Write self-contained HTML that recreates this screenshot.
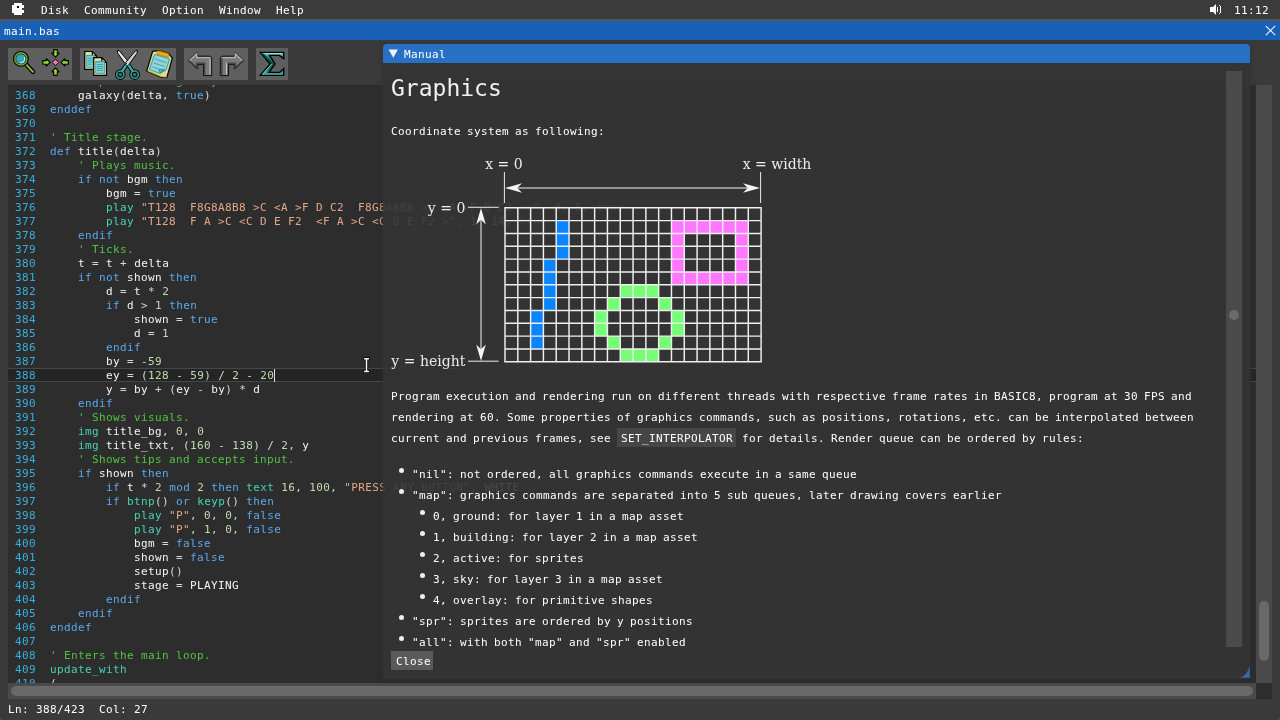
<!DOCTYPE html>
<html lang="en">
<head>
<meta charset="utf-8">
<title>BASIC8 - main.bas</title>
<style>
*{box-sizing:border-box;margin:0;padding:0}
html,body{width:1280px;height:720px;overflow:hidden;background:#3a3a3a}
body{position:relative;font-family:"DejaVu Sans Mono","Liberation Mono",monospace;font-size:11px;line-height:14px;letter-spacing:0.378px;color:#fff;cursor:default;-webkit-text-stroke:0}
#app{position:absolute;left:0;top:0;width:1280px;height:720px;will-change:transform;overflow:hidden}
.abs{position:absolute}
.t{position:absolute;white-space:pre;height:14px}
#menubar{position:absolute;left:0;top:0;width:1280px;height:19px;background:#3b3b3b}
#menuline{position:absolute;left:0;top:19px;width:1280px;height:701px;background:#585858}
#win{position:absolute;left:0;top:21px;width:1280px;height:699px;background:#3a3a3a;border-radius:3px}
#titlebar{position:absolute;left:0;top:21px;width:1280px;height:19px;background:#1961b6;border-radius:3px 3px 0 0}
.grp{position:absolute;top:48px;height:32px;background:#5f5f5f}
#editor{position:absolute;left:8px;top:85px;width:1248px;height:598px;background:#2d2d2d;overflow:hidden}
.cl{position:absolute;left:0;width:1248px;height:14px;white-space:pre}
.cl.cur{background:#252525;box-shadow:inset 0 1px 0 #474747,inset 0 -1px 0 #474747}
.ln{position:absolute;left:7px;top:1px;color:#34b0e0}
.cd{position:absolute;left:42px;top:1px;color:#e4e4e4}
.kw{color:#58a8f0}.fn{color:#44d4b4}.cm{color:#50c440}.st{color:#e4a689}.nu{color:#c0dcae}.id{color:#f4f4f4}.pu{color:#d8d8d8}
#vtrack{position:absolute;left:1256px;top:85px;width:16px;height:598px;background:#4a4a4a}
#vthumb{position:absolute;left:1259px;top:601px;width:10px;height:60px;background:#696969;border-radius:5px}
#htrack{position:absolute;left:8px;top:683px;width:1248px;height:16px;background:#4a4a4a}
#hthumb{position:absolute;left:11px;top:686px;width:1242px;height:10px;background:#696969;border-radius:5px}
#corner{position:absolute;left:1256px;top:683px;width:16px;height:16px;background:#2d2d2d}
#modal{position:absolute;left:383px;top:44px;width:867px;height:635px;background:rgba(52,52,52,0.9);border-radius:4px 4px 3px 3px;box-shadow:0 0 5px 1px rgba(48,48,48,0.6)}
#mtitle{position:absolute;left:0;top:0;width:867px;height:19px;background:#2671c4;border-radius:4px 4px 0 0}
#mtrack{position:absolute;left:1226px;top:71px;width:16px;height:576px;background:#4a4a4a}
#mthumb{position:absolute;left:1229px;top:310px;width:10px;height:10px;background:#6a6a6a;border-radius:5px}
#mclip{position:absolute;left:383px;top:70px;width:843px;height:578px;overflow:hidden}
.m{position:absolute;white-space:pre;height:14px;color:#fff;word-spacing:-1px}
.b{position:absolute;width:5px;height:5px;border-radius:2.5px;background:#f0f0f0}
h1{position:absolute;left:8px;top:4px;font:normal 23px/28px "DejaVu Sans Mono","Liberation Mono",monospace;letter-spacing:0;color:#f0f0f0;white-space:pre}
#codebox{position:absolute;left:234px;top:358px;width:119px;height:19px;background:#464646}
#close{position:absolute;left:391px;top:651px;width:42px;height:19px;background:#5a5a5a}
</style>
</head>
<body>
<div id="app">
<div id="menubar"></div>
<div id="menuline"></div>
<div id="win"></div>
<!--LOGO-->
<div class="t" style="left:41px;top:4px">Disk</div>
<div class="t" style="left:84px;top:4px">Community</div>
<div class="t" style="left:162px;top:4px">Option</div>
<div class="t" style="left:219px;top:4px">Window</div>
<div class="t" style="left:276px;top:4px">Help</div>
<div class="t" style="left:1234px;top:4px">11:12</div>
<div id="titlebar"></div>
<div class="t" style="left:4px;top:25px">main.bas</div>
<svg class="abs" style="left:1265px;top:25px" width="11" height="11" viewBox="0 0 11 11"><path d="M0.8 0.8 L10.2 10.2 M10.2 0.8 L0.8 10.2" stroke="#f4f4f4" stroke-width="1.1" fill="none"/></svg>
<div class="grp" style="left:8px;width:64px"></div>
<div class="grp" style="left:80px;width:96px"></div>
<div class="grp" style="left:184px;width:64px"></div>
<div class="grp" style="left:256px;width:32px"></div>
<svg class="abs" style="left:0;top:0" width="1280" height="20" viewBox="0 0 1280 20" shape-rendering="crispEdges">
<g fill="#ffffff">
<rect x="14" y="3" width="8" height="12"/>
<rect x="12" y="5" width="10" height="8"/>
<rect x="22" y="5" width="2" height="3"/>
<rect x="22" y="10" width="2" height="3"/>
<rect x="21" y="5" width="1" height="0"/>
</g>
<rect x="17" y="6" width="2" height="2" fill="#101010"/>
<g fill="#ffffff">
<rect x="1210" y="7" width="3" height="5"/>
<path d="M1213 7 L1216 4 V15 L1213 12 Z" shape-rendering="geometricPrecision"/>
<rect x="1217" y="7" width="1" height="5"/>
<path d="M1219 5 h1 v1 h1 v7 h-1 v1 h-1 v-1 h1 v-7 h-1 Z"/>
</g>
</svg>
<svg class="abs" style="left:0;top:44px" width="300" height="40" viewBox="0 44 300 40">
<defs>
<linearGradient id="gl" x1="0" y1="0" x2="0" y2="1"><stop offset="0" stop-color="#a8a8a8"/><stop offset="0.3" stop-color="#808080"/><stop offset="1" stop-color="#6a6a6a"/></linearGradient>
<linearGradient id="gr" x1="0" y1="0" x2="0" y2="1"><stop offset="0" stop-color="#a8a8a8"/><stop offset="0.3" stop-color="#808080"/><stop offset="1" stop-color="#6a6a6a"/></linearGradient>
<linearGradient id="gs" x1="0" y1="0" x2="0" y2="1"><stop offset="0" stop-color="#78dcd4"/><stop offset="0.2" stop-color="#1c8682"/><stop offset="0.6" stop-color="#0c5653"/><stop offset="0.9" stop-color="#2a9a94"/><stop offset="1" stop-color="#68d0c8"/></linearGradient>
</defs>
<!-- find -->
<path d="M26.3 64.6 L33 71.8" stroke="#000" stroke-width="4.4" stroke-linecap="round" fill="none"/>
<path d="M26.3 64.6 L33 71.8" stroke="#88c436" stroke-width="1.9" stroke-linecap="round" fill="none"/>
<circle cx="20.9" cy="58.9" r="7.9" fill="#000"/>
<circle cx="20.9" cy="58.9" r="6.8" fill="#6cac2c"/>
<circle cx="20.9" cy="58.9" r="5.4" fill="#0c3c44"/>
<circle cx="20.9" cy="58.9" r="4.7" fill="#3aa4b0"/>
<path d="M24.3 57.2 A3.8 3.8 0 0 1 19.8 62.6" stroke="#d6f4f4" stroke-width="1.1" fill="none"/>
<!-- center -->
<g fill="#98d830" stroke="#000" stroke-width="1.2" stroke-linejoin="round">
<path d="M53.7 49.7 H57.3 V53.2 H59.1 L55.5 57.1 L51.9 53.2 H53.7 Z"/>
<path d="M53.7 75.3 H57.3 V71.8 H59.1 L55.5 67.9 L51.9 71.8 H53.7 Z"/>
<path d="M42.8 60.6 V64.2 H46.3 V66 L50.2 62.4 L46.3 58.8 V60.6 Z"/>
<path d="M68.4 60.6 V64.2 H64.9 V66 L61 62.4 L64.9 58.8 V60.6 Z"/>
</g>
<g fill="none" stroke="#6aa820" stroke-width="0.9">
<path d="M56.7 50.4 V53.6 M56.7 74.6 V71.4 M43.4 63.6 H46.6 M67.8 63.6 H64.6"/>
</g>
<path d="M55.5 59.2 L58.7 62.4 L55.5 65.6 L52.3 62.4 Z" fill="#ff78b4" stroke="#000" stroke-width="0.9"/>
<!-- copy -->
<g stroke="#000" stroke-width="1.2" stroke-linejoin="miter">
<path d="M84.7 51.5 H92.3 L96.5 55.7 V69.4 H84.7 Z" fill="#e6dca0"/>
<path d="M92.3 51.5 V55.7 H96.5" fill="none"/>
</g>
<rect x="86.3" y="55" width="8.6" height="12.6" fill="#34a4ac"/>
<rect x="87.3" y="56.2" width="6.6" height="10.4" fill="#90d4d8"/>
<path d="M88 58.2 H93.4 M88 60.2 H93.4 M88 62.2 H93.4 M88 64.2 H93.4" stroke="#2c9aa4" stroke-width="0.9"/>
<g stroke="#000" stroke-width="1.2" stroke-linejoin="miter">
<path d="M93.7 57.7 H101.8 L106.5 62.4 V75.4 H93.7 Z" fill="#e6dca0"/>
<path d="M101.8 57.7 V62.4 H106.5" fill="none"/>
</g>
<rect x="95.3" y="61" width="9.6" height="12.8" fill="#34a4ac"/>
<rect x="96.3" y="62.4" width="7.6" height="10.4" fill="#90d4d8"/>
<path d="M97 64.4 H103.2 M97 66.4 H103.2 M97 68.4 H103.2 M97 70.4 H103.2" stroke="#2c9aa4" stroke-width="0.9"/>
<!-- cut -->
<g stroke="#000" stroke-width="1" stroke-linejoin="round">
<path d="M117.4 50.3 L119.2 50.6 L129.2 62.6 L126.6 65.6 L117.7 53.2 Z" fill="#e4e4e4"/>
<path d="M137.4 50.3 L135.6 50.6 L125.6 62.6 L128.2 65.6 L137.1 53.2 Z" fill="#d0d0d0"/>
</g>
<path d="M126.2 65.2 L121.8 71.6" stroke="#000" stroke-width="4.2" fill="none"/>
<path d="M128.6 65.2 L133 71.6" stroke="#000" stroke-width="4.2" fill="none"/>
<circle cx="120.3" cy="74.6" r="3.6" fill="none" stroke="#000" stroke-width="3.4"/>
<circle cx="134.7" cy="74.6" r="3.6" fill="none" stroke="#000" stroke-width="3.4"/>
<circle cx="120.3" cy="74.6" r="3.6" fill="none" stroke="#23a59e" stroke-width="1.6"/>
<circle cx="134.7" cy="74.6" r="3.6" fill="none" stroke="#23a59e" stroke-width="1.6"/>
<path d="M126.2 65.2 L121.8 71.6" stroke="#2fb0aa" stroke-width="2.4" fill="none"/>
<path d="M128.6 65.2 L133 71.6" stroke="#2fb0aa" stroke-width="2.4" fill="none"/>
<circle cx="127.4" cy="64.3" r="0.8" fill="#fff"/>
<!-- paste -->
<path d="M152.6 51.3 L158 50.6 L168.6 53.4 L172.3 58.2 L166.8 77.6 L161.6 77.4 L146.7 71 Z" fill="#e2d898" stroke="#000" stroke-width="1.2" stroke-linejoin="round"/>
<path d="M166.8 77 L161.6 76.8 L147.6 70.8" fill="none" stroke="#c8b428" stroke-width="1"/>
<path d="M154.6 54.4 L169.6 58.8 L166 70.2 L159.8 73.4 L149.4 69.6 Z" fill="#92d2d8" stroke="#2fa0ac" stroke-width="1"/>
<path d="M154.8 59 L166.4 62.6 M153.6 63 L165.2 66.6 M152.4 67 L158.4 68.8" stroke="#2fa8b4" stroke-width="0.9" fill="none"/>
<path d="M159 69.2 L164.6 69.6 L160 73.4 Z" fill="#58b878" stroke="#1f8f8a" stroke-width="0.8"/>
<path d="M157.6 50.8 L168.6 53.6 L168.2 57.4 L157 54.2 Z" fill="#eaae0a" stroke="#b88000" stroke-width="0.8"/>
<!-- undo / redo -->
<path d="M188.3 60.5 L196.7 52.3 H197.6 V56.2 H210.4 L211.7 57.5 V75.6 H203.5 V64.4 H197.6 V68.7 H196.7 Z" fill="#7a7a7a" stroke="#0a0a0a" stroke-width="0.95" stroke-linejoin="round"/>
<path d="M189.6 60.5 L196.8 53.6 V57.6 H209.8" stroke="#b4b4b4" stroke-width="1.3" fill="none"/>
<path d="M210 58.4 V74.6" stroke="#b0b0b0" stroke-width="1.5" fill="none"/>
<path d="M190.2 61.4 L196.8 67.6 V63.2 H204.6 V74.8" stroke="#454545" stroke-width="1.5" fill="none"/>
<path d="M243.7 60.5 L235.3 52.3 H234.4 V56.2 H221.6 L220.3 57.5 V75.6 H228.5 V64.4 H234.4 V68.7 H235.3 Z" fill="#7a7a7a" stroke="#0a0a0a" stroke-width="0.95" stroke-linejoin="round"/>
<path d="M242.4 60.5 L235.2 53.6 V57.6 H222.6" stroke="#b4b4b4" stroke-width="1.3" fill="none"/>
<path d="M221.9 58.4 V74.8" stroke="#454545" stroke-width="1.5" fill="none"/>
<path d="M226.6 74.6 V63.2 H235.2 V67.6 L241.8 61.4" stroke="#454545" stroke-width="1.4" fill="none"/>
<path d="M226.5 74.6 V62.4" stroke="#c0c0c0" stroke-width="1.2" fill="none"/>
<!-- sigma -->
<path d="M260.4 52.5 H283.7 V58.6 L279.3 55.4 H269.6 L275 64 L269 72.4 H279.6 L283.7 68.6 V75.4 H260.4 L270.2 64 Z" fill="url(#gs)" stroke="#000" stroke-width="1.4" stroke-linejoin="miter"/>
<path d="M262.4 53.6 H282.6 M262.6 74.3 L271.8 64" stroke="#8ceae2" stroke-width="1" fill="none"/>
<path d="M263 53.8 L272.4 64" stroke="#0a4a48" stroke-width="1.6" fill="none"/>
</svg>

<div id="editor">
<div class="cl" style="top:-11px"><span class="ln">367</span><span class="cd">    <span class="cm">' Updates the galaxy.</span></span></div>
<div class="cl" style="top:3px"><span class="ln">368</span><span class="cd">    <span class="id">galaxy</span><span class="pu">(</span><span class="id">delta</span><span class="pu">,</span> <span class="kw">true</span><span class="pu">)</span></span></div>
<div class="cl" style="top:17px"><span class="ln">369</span><span class="cd"><span class="kw">enddef</span></span></div>
<div class="cl" style="top:31px"><span class="ln">370</span></div>
<div class="cl" style="top:45px"><span class="ln">371</span><span class="cd"><span class="cm">' Title stage.</span></span></div>
<div class="cl" style="top:59px"><span class="ln">372</span><span class="cd"><span class="kw">def</span> <span class="id">title</span><span class="pu">(</span><span class="id">delta</span><span class="pu">)</span></span></div>
<div class="cl" style="top:73px"><span class="ln">373</span><span class="cd">    <span class="cm">' Plays music.</span></span></div>
<div class="cl" style="top:87px"><span class="ln">374</span><span class="cd">    <span class="kw">if</span> <span class="kw">not</span> <span class="id">bgm</span> <span class="kw">then</span></span></div>
<div class="cl" style="top:101px"><span class="ln">375</span><span class="cd">        <span class="id">bgm</span> <span class="pu">=</span> <span class="kw">true</span></span></div>
<div class="cl" style="top:115px"><span class="ln">376</span><span class="cd">        <span class="fn">play</span> <span class="st">"T128  F8G8A8B8 &gt;C &lt;A &gt;F D C2  F8G8A8B8 &gt;C &lt;A &gt;F D C2 &lt;&lt;"</span><span class="pu">,</span> <span class="nu">0</span><span class="pu">,</span> <span class="nu">5</span><span class="pu">,</span> <span class="kw">true</span></span></div>
<div class="cl" style="top:129px"><span class="ln">377</span><span class="cd">        <span class="fn">play</span> <span class="st">"T128  F A &gt;C &lt;C D E F2  &lt;F A &gt;C &lt;C D E F2 &gt;"</span><span class="pu">,</span> <span class="nu">1</span><span class="pu">,</span> <span class="nu">14</span><span class="pu">,</span> <span class="kw">true</span></span></div>
<div class="cl" style="top:143px"><span class="ln">378</span><span class="cd">    <span class="kw">endif</span></span></div>
<div class="cl" style="top:157px"><span class="ln">379</span><span class="cd">    <span class="cm">' Ticks.</span></span></div>
<div class="cl" style="top:171px"><span class="ln">380</span><span class="cd">    <span class="id">t</span> <span class="pu">=</span> <span class="id">t</span> <span class="pu">+</span> <span class="id">delta</span></span></div>
<div class="cl" style="top:185px"><span class="ln">381</span><span class="cd">    <span class="kw">if</span> <span class="kw">not</span> <span class="id">shown</span> <span class="kw">then</span></span></div>
<div class="cl" style="top:199px"><span class="ln">382</span><span class="cd">        <span class="id">d</span> <span class="pu">=</span> <span class="id">t</span> <span class="pu">*</span> <span class="nu">2</span></span></div>
<div class="cl" style="top:213px"><span class="ln">383</span><span class="cd">        <span class="kw">if</span> <span class="id">d</span> <span class="pu">&gt;</span> <span class="nu">1</span> <span class="kw">then</span></span></div>
<div class="cl" style="top:227px"><span class="ln">384</span><span class="cd">            <span class="id">shown</span> <span class="pu">=</span> <span class="kw">true</span></span></div>
<div class="cl" style="top:241px"><span class="ln">385</span><span class="cd">            <span class="id">d</span> <span class="pu">=</span> <span class="nu">1</span></span></div>
<div class="cl" style="top:255px"><span class="ln">386</span><span class="cd">        <span class="kw">endif</span></span></div>
<div class="cl" style="top:269px"><span class="ln">387</span><span class="cd">        <span class="id">by</span> <span class="pu">=</span> <span class="pu">-</span><span class="nu">59</span></span></div>
<div class="cl cur" style="top:283px"><span class="ln">388</span><span class="cd">        <span class="id">ey</span> <span class="pu">=</span> <span class="pu">(</span><span class="nu">128</span> <span class="pu">-</span> <span class="nu">59</span><span class="pu">)</span> <span class="pu">/</span> <span class="nu">2</span> <span class="pu">-</span> <span class="nu">20</span></span></div>
<div class="cl" style="top:297px"><span class="ln">389</span><span class="cd">        <span class="id">y</span> <span class="pu">=</span> <span class="id">by</span> <span class="pu">+</span> <span class="pu">(</span><span class="id">ey</span> <span class="pu">-</span> <span class="id">by</span><span class="pu">)</span> <span class="pu">*</span> <span class="id">d</span></span></div>
<div class="cl" style="top:311px"><span class="ln">390</span><span class="cd">    <span class="kw">endif</span></span></div>
<div class="cl" style="top:325px"><span class="ln">391</span><span class="cd">    <span class="cm">' Shows visuals.</span></span></div>
<div class="cl" style="top:339px"><span class="ln">392</span><span class="cd">    <span class="fn">img</span> <span class="id">title_bg</span><span class="pu">,</span> <span class="nu">0</span><span class="pu">,</span> <span class="nu">0</span></span></div>
<div class="cl" style="top:353px"><span class="ln">393</span><span class="cd">    <span class="fn">img</span> <span class="id">title_txt</span><span class="pu">,</span> <span class="pu">(</span><span class="nu">160</span> <span class="pu">-</span> <span class="nu">138</span><span class="pu">)</span> <span class="pu">/</span> <span class="nu">2</span><span class="pu">,</span> <span class="id">y</span></span></div>
<div class="cl" style="top:367px"><span class="ln">394</span><span class="cd">    <span class="cm">' Shows tips and accepts input.</span></span></div>
<div class="cl" style="top:381px"><span class="ln">395</span><span class="cd">    <span class="kw">if</span> <span class="id">shown</span> <span class="kw">then</span></span></div>
<div class="cl" style="top:395px"><span class="ln">396</span><span class="cd">        <span class="kw">if</span> <span class="id">t</span> <span class="pu">*</span> <span class="nu">2</span> <span class="kw">mod</span> <span class="nu">2</span> <span class="kw">then</span> <span class="fn">text</span> <span class="nu">16</span><span class="pu">,</span> <span class="nu">100</span><span class="pu">,</span> <span class="st">"PRESS ANY BUTTON"</span><span class="pu">,</span> <span class="id">WHITE</span></span></div>
<div class="cl" style="top:409px"><span class="ln">397</span><span class="cd">        <span class="kw">if</span> <span class="fn">btnp</span><span class="pu">(</span><span class="pu">)</span> <span class="kw">or</span> <span class="fn">keyp</span><span class="pu">(</span><span class="pu">)</span> <span class="kw">then</span></span></div>
<div class="cl" style="top:423px"><span class="ln">398</span><span class="cd">            <span class="fn">play</span> <span class="st">"P"</span><span class="pu">,</span> <span class="nu">0</span><span class="pu">,</span> <span class="nu">0</span><span class="pu">,</span> <span class="kw">false</span></span></div>
<div class="cl" style="top:437px"><span class="ln">399</span><span class="cd">            <span class="fn">play</span> <span class="st">"P"</span><span class="pu">,</span> <span class="nu">1</span><span class="pu">,</span> <span class="nu">0</span><span class="pu">,</span> <span class="kw">false</span></span></div>
<div class="cl" style="top:451px"><span class="ln">400</span><span class="cd">            <span class="id">bgm</span> <span class="pu">=</span> <span class="kw">false</span></span></div>
<div class="cl" style="top:465px"><span class="ln">401</span><span class="cd">            <span class="id">shown</span> <span class="pu">=</span> <span class="kw">false</span></span></div>
<div class="cl" style="top:479px"><span class="ln">402</span><span class="cd">            <span class="id">setup</span><span class="pu">(</span><span class="pu">)</span></span></div>
<div class="cl" style="top:493px"><span class="ln">403</span><span class="cd">            <span class="id">stage</span> <span class="pu">=</span> <span class="id">PLAYING</span></span></div>
<div class="cl" style="top:507px"><span class="ln">404</span><span class="cd">        <span class="kw">endif</span></span></div>
<div class="cl" style="top:521px"><span class="ln">405</span><span class="cd">    <span class="kw">endif</span></span></div>
<div class="cl" style="top:535px"><span class="ln">406</span><span class="cd"><span class="kw">enddef</span></span></div>
<div class="cl" style="top:549px"><span class="ln">407</span></div>
<div class="cl" style="top:563px"><span class="ln">408</span><span class="cd"><span class="cm">' Enters the main loop.</span></span></div>
<div class="cl" style="top:577px"><span class="ln">409</span><span class="cd"><span class="fn">update_with</span></span></div>
<div class="cl" style="top:591px"><span class="ln">410</span><span class="cd"><span class="pu">(</span></span></div>
<div class="abs" style="left:266px;top:284px;width:1px;height:13px;background:#e0e0e0"></div>
</div>
<div id="vtrack"></div><div id="vthumb"></div>
<div id="htrack"></div><div id="hthumb"></div>
<div id="corner"></div>
<div class="t" style="left:8px;top:703px">Ln: 388/423  Col: 27</div>

<svg class="abs" style="left:362px;top:356px" width="9" height="18" viewBox="362 356 9 18"><path d="M364.5 358.7 H368.5 M364.5 371.5 H368.5 M366.5 358.7 V371.5" stroke="#000" stroke-width="3.2" stroke-linecap="round" stroke-linejoin="round" fill="none"/><path d="M364.5 358.7 H368.5 M364.5 371.5 H368.5 M366.5 358.7 V371.5" stroke="#fff" stroke-width="1.5" stroke-linecap="round" fill="none"/></svg>
<div id="modal"><div id="mtitle"></div></div>
<svg class="abs" style="left:388px;top:49px" width="11" height="10" viewBox="0 0 11 10"><path d="M0.6 0.5 H9.9 L5.25 8.8 Z" fill="#f4f4f4"/></svg>
<div class="t" style="left:404px;top:48px">Manual</div>
<div id="mtrack"></div><div id="mthumb"></div>
<div id="mclip">
<h1>Graphics</h1>
<div class="m" style="left:8px;top:55px">Coordinate system as following:</div>
<svg class="abs" style="left:0;top:0" width="843" height="578" viewBox="383 70 843 578">
<g>
<rect x="556.22" y="220.63" width="12.80" height="12.83" fill="#0a84ff"/>
<rect x="556.22" y="233.46" width="12.80" height="12.83" fill="#0a84ff"/>
<rect x="556.22" y="246.29" width="12.80" height="12.83" fill="#0a84ff"/>
<rect x="543.41" y="259.12" width="12.80" height="12.83" fill="#0a84ff"/>
<rect x="543.41" y="271.95" width="12.80" height="12.83" fill="#0a84ff"/>
<rect x="543.41" y="284.78" width="12.80" height="12.83" fill="#0a84ff"/>
<rect x="543.41" y="297.61" width="12.80" height="12.83" fill="#0a84ff"/>
<rect x="530.61" y="310.44" width="12.80" height="12.83" fill="#0a84ff"/>
<rect x="530.61" y="323.27" width="12.80" height="12.83" fill="#0a84ff"/>
<rect x="530.61" y="336.10" width="12.80" height="12.83" fill="#0a84ff"/>
<rect x="671.47" y="220.63" width="12.80" height="12.83" fill="#ff76ff"/>
<rect x="671.47" y="271.95" width="12.80" height="12.83" fill="#ff76ff"/>
<rect x="684.27" y="220.63" width="12.80" height="12.83" fill="#ff76ff"/>
<rect x="684.27" y="271.95" width="12.80" height="12.83" fill="#ff76ff"/>
<rect x="697.08" y="220.63" width="12.80" height="12.83" fill="#ff76ff"/>
<rect x="697.08" y="271.95" width="12.80" height="12.83" fill="#ff76ff"/>
<rect x="709.88" y="220.63" width="12.80" height="12.83" fill="#ff76ff"/>
<rect x="709.88" y="271.95" width="12.80" height="12.83" fill="#ff76ff"/>
<rect x="722.68" y="220.63" width="12.80" height="12.83" fill="#ff76ff"/>
<rect x="722.68" y="271.95" width="12.80" height="12.83" fill="#ff76ff"/>
<rect x="735.49" y="220.63" width="12.80" height="12.83" fill="#ff76ff"/>
<rect x="735.49" y="271.95" width="12.80" height="12.83" fill="#ff76ff"/>
<rect x="671.47" y="233.46" width="12.80" height="12.83" fill="#ff76ff"/>
<rect x="735.49" y="233.46" width="12.80" height="12.83" fill="#ff76ff"/>
<rect x="671.47" y="246.29" width="12.80" height="12.83" fill="#ff76ff"/>
<rect x="735.49" y="246.29" width="12.80" height="12.83" fill="#ff76ff"/>
<rect x="671.47" y="259.12" width="12.80" height="12.83" fill="#ff76ff"/>
<rect x="735.49" y="259.12" width="12.80" height="12.83" fill="#ff76ff"/>
<rect x="620.25" y="284.78" width="12.80" height="12.83" fill="#76ff76"/>
<rect x="620.25" y="348.93" width="12.80" height="12.83" fill="#76ff76"/>
<rect x="633.05" y="284.78" width="12.80" height="12.83" fill="#76ff76"/>
<rect x="633.05" y="348.93" width="12.80" height="12.83" fill="#76ff76"/>
<rect x="645.86" y="284.78" width="12.80" height="12.83" fill="#76ff76"/>
<rect x="645.86" y="348.93" width="12.80" height="12.83" fill="#76ff76"/>
<rect x="607.44" y="297.61" width="12.80" height="12.83" fill="#76ff76"/>
<rect x="658.66" y="297.61" width="12.80" height="12.83" fill="#76ff76"/>
<rect x="607.44" y="336.10" width="12.80" height="12.83" fill="#76ff76"/>
<rect x="658.66" y="336.10" width="12.80" height="12.83" fill="#76ff76"/>
<rect x="594.63" y="310.44" width="12.80" height="12.83" fill="#76ff76"/>
<rect x="671.47" y="310.44" width="12.80" height="12.83" fill="#76ff76"/>
<rect x="594.63" y="323.27" width="12.80" height="12.83" fill="#76ff76"/>
<rect x="671.47" y="323.27" width="12.80" height="12.83" fill="#76ff76"/>
</g>
<path d="M505.00 207.10 V362.46 M517.80 207.10 V362.46 M530.61 207.10 V362.46 M543.41 207.10 V362.46 M556.22 207.10 V362.46 M569.02 207.10 V362.46 M581.83 207.10 V362.46 M594.63 207.10 V362.46 M607.44 207.10 V362.46 M620.25 207.10 V362.46 M633.05 207.10 V362.46 M645.86 207.10 V362.46 M658.66 207.10 V362.46 M671.47 207.10 V362.46 M684.27 207.10 V362.46 M697.08 207.10 V362.46 M709.88 207.10 V362.46 M722.68 207.10 V362.46 M735.49 207.10 V362.46 M748.29 207.10 V362.46 M761.10 207.10 V362.46 M504.30 207.80 H761.80 M504.30 220.63 H761.80 M504.30 233.46 H761.80 M504.30 246.29 H761.80 M504.30 259.12 H761.80 M504.30 271.95 H761.80 M504.30 284.78 H761.80 M504.30 297.61 H761.80 M504.30 310.44 H761.80 M504.30 323.27 H761.80 M504.30 336.10 H761.80 M504.30 348.93 H761.80 M504.30 361.76 H761.80" stroke="#f0f0f0" stroke-width="1.45" fill="none"/>
<g stroke="#ececec" stroke-width="1" fill="none">
<path d="M504.4 172 V203 M760.6 172 V203 M468 207.3 H498.6 M468 361.2 H498.6"/>
</g>
<g stroke="#b4b4b4" stroke-width="1.5" fill="none">
<path d="M512 188 H753 M481 216 V353"/>
</g>
<g fill="#f4f4f4">
<path d="M505 188 L522 183.2 L517.2 188 L522 192.8 Z"/>
<path d="M760 188 L743 183.2 L747.8 188 L743 192.8 Z"/>
<path d="M481 208 L485.8 224.5 L481 219.8 L476.2 224.5 Z"/>
<path d="M481 361 L485.8 344.5 L481 349.2 L476.2 344.5 Z"/>
</g>
<g font-family="'DejaVu Serif','Liberation Serif',serif" font-size="14" fill="#ececec" letter-spacing="0" word-spacing="0">
<text x="485.2" y="168.6">x = 0</text>
<text x="742.7" y="168.6">x = width</text>
<text x="465.3" y="212.6" text-anchor="end">y = 0</text>
<text x="465.3" y="365.6" text-anchor="end">y = height</text>
</g>
</svg>
<div class="m" style="left:8px;top:320px">Program execution and rendering run on different threads with respective frame rates in BASIC8, program at 30 FPS and</div>
<div class="m" style="left:8px;top:341px">rendering at 60. Some properties of graphics commands, such as positions, rotations, etc. can be interpolated between</div>
<div class="m" style="left:8px;top:362px">current and previous frames, see</div>
<div id="codebox"></div>
<div class="m" style="left:238px;top:362px">SET_INTERPOLATOR</div>
<div class="m" style="left:359px;top:362px">for details. Render queue can be ordered by rules:</div>
<div class="b" style="left:16px;top:398px"></div><div class="m" style="left:29px;top:398px">"nil": not ordered, all graphics commands execute in a same queue</div>
<div class="b" style="left:16px;top:419px"></div><div class="m" style="left:29px;top:419px">"map": graphics commands are separated into 5 sub queues, later drawing covers earlier</div>
<div class="b" style="left:37px;top:440px"></div><div class="m" style="left:50px;top:440px">0, ground: for layer 1 in a map asset</div>
<div class="b" style="left:37px;top:461px"></div><div class="m" style="left:50px;top:461px">1, building: for layer 2 in a map asset</div>
<div class="b" style="left:37px;top:482px"></div><div class="m" style="left:50px;top:482px">2, active: for sprites</div>
<div class="b" style="left:37px;top:503px"></div><div class="m" style="left:50px;top:503px">3, sky: for layer 3 in a map asset</div>
<div class="b" style="left:37px;top:524px"></div><div class="m" style="left:50px;top:524px">4, overlay: for primitive shapes</div>
<div class="b" style="left:16px;top:545px"></div><div class="m" style="left:29px;top:545px">"spr": sprites are ordered by y positions</div>
<div class="b" style="left:16px;top:566px"></div><div class="m" style="left:29px;top:566px">"all": with both "map" and "spr" enabled</div>
</div>
<div id="close"></div>
<div class="t" style="left:396px;top:655px">Close</div>
<svg class="abs" style="left:1238px;top:665px" width="12" height="13" viewBox="1238 665 12 13"><path d="M1249.8 666 V677.8 H1239.8 Q1247 675.5 1249.8 666 Z" fill="#3a68a6"/></svg>
</div>
</body>
</html>
